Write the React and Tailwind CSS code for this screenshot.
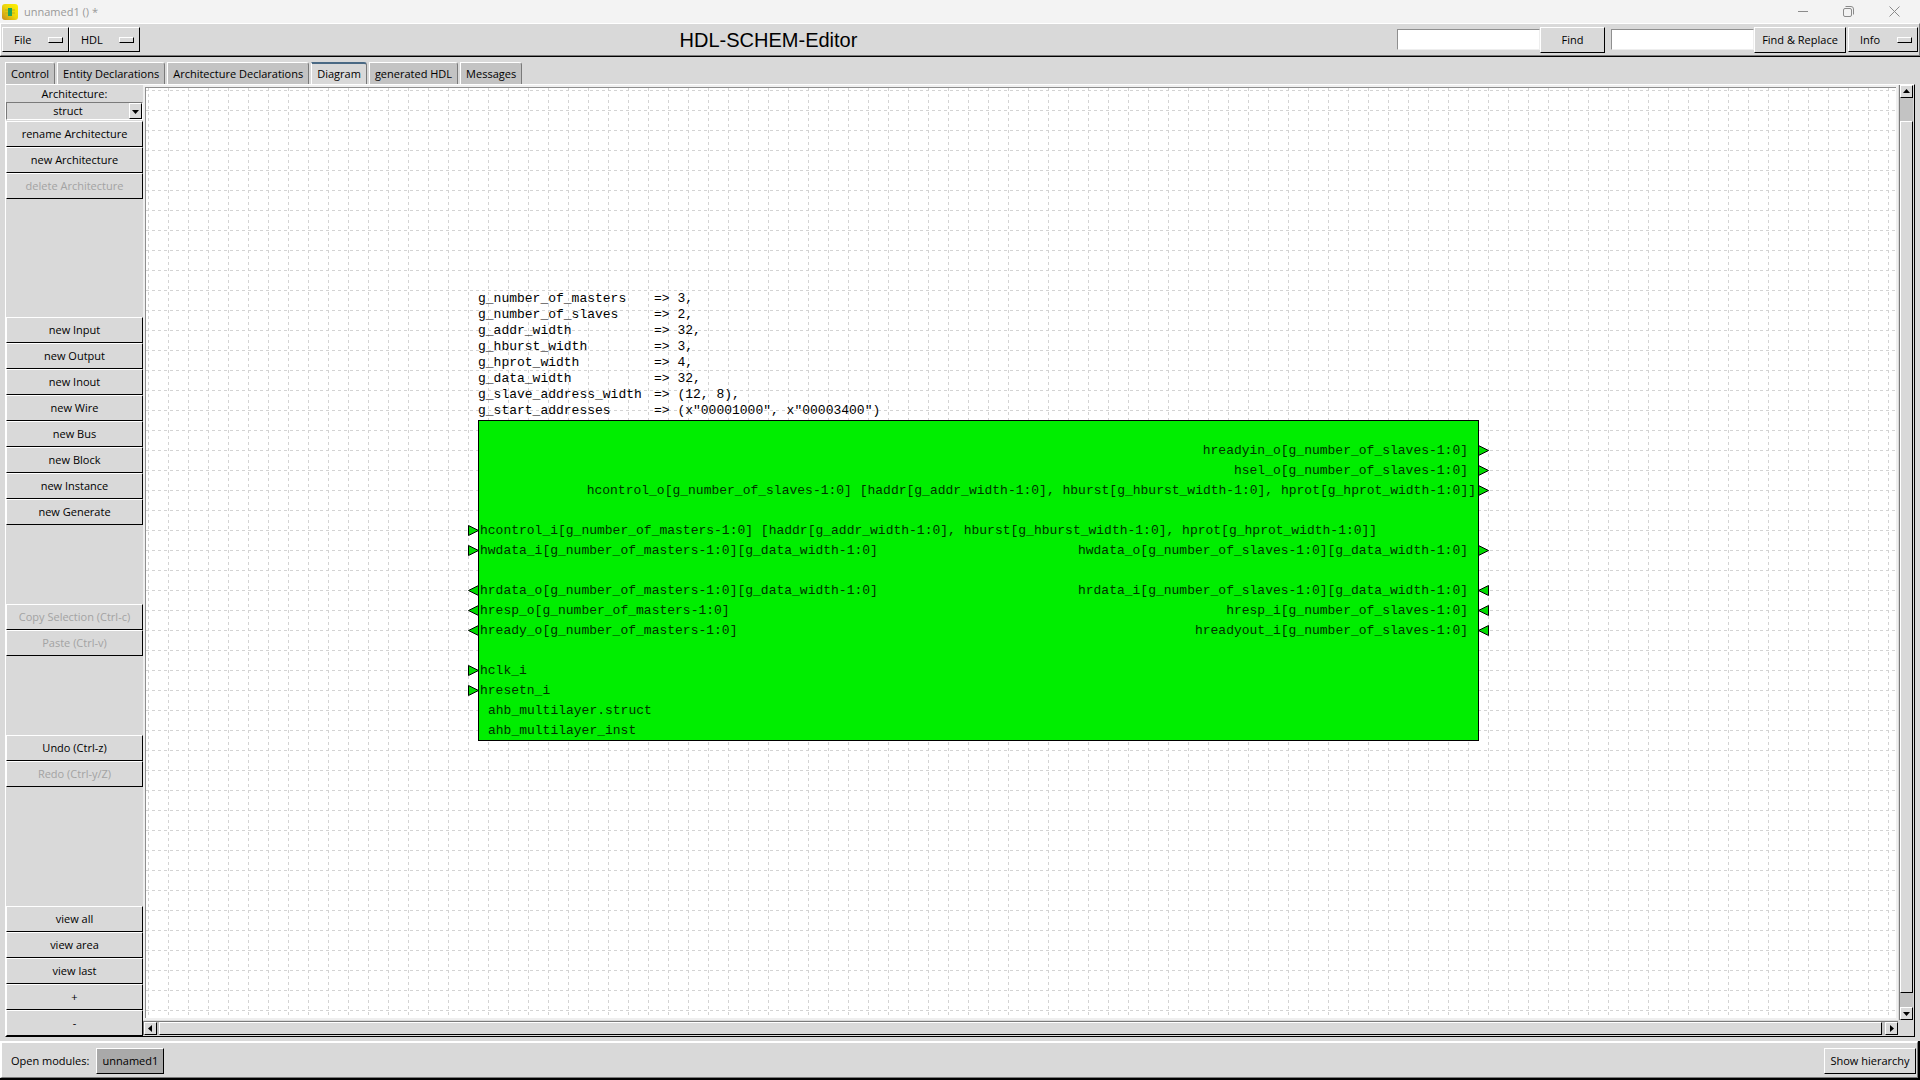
import { useState } from 'react';

const tabs = [
  'Control',
  'Entity Declarations',
  'Architecture Declarations',
  'Diagram',
  'generated HDL',
  'Messages',
];

const insertButtons = ['Input', 'Output', 'Inout', 'Wire', 'Bus', 'Block', 'Instance', 'Generate'];
const viewButtons = ['view all', 'view area', 'view last', '+', '-'];

const generics = [
  { name: 'g_number_of_masters', value: '3,' },
  { name: 'g_number_of_slaves', value: '2,' },
  { name: 'g_addr_width', value: '32,' },
  { name: 'g_hburst_width', value: '3,' },
  { name: 'g_hprot_width', value: '4,' },
  { name: 'g_data_width', value: '32,' },
  { name: 'g_slave_address_width', value: '(12, 8),' },
  { name: 'g_start_addresses', value: '(x"00001000", x"00003400")' },
];

const control = '[haddr[g_addr_width-1:0], hburst[g_hburst_width-1:0], hprot[g_hprot_width-1:0]]';

// y is measured from the top edge of the instance block
const leftPorts = [
  { y: 110, dir: 'in', label: `hcontrol_i[g_number_of_masters-1:0] ${control}` },
  { y: 130, dir: 'in', label: 'hwdata_i[g_number_of_masters-1:0][g_data_width-1:0]' },
  { y: 170, dir: 'out', label: 'hrdata_o[g_number_of_masters-1:0][g_data_width-1:0]' },
  { y: 190, dir: 'out', label: 'hresp_o[g_number_of_masters-1:0]' },
  { y: 210, dir: 'out', label: 'hready_o[g_number_of_masters-1:0]' },
  { y: 250, dir: 'in', label: 'hclk_i' },
  { y: 270, dir: 'in', label: 'hresetn_i' },
];

const rightPorts = [
  { y: 30, dir: 'out', label: 'hreadyin_o[g_number_of_slaves-1:0]' },
  { y: 50, dir: 'out', label: 'hsel_o[g_number_of_slaves-1:0]' },
  { y: 70, dir: 'out', label: `hcontrol_o[g_number_of_slaves-1:0] ${control}`, x: 998 },
  { y: 130, dir: 'out', label: 'hwdata_o[g_number_of_slaves-1:0][g_data_width-1:0]' },
  { y: 170, dir: 'in', label: 'hrdata_i[g_number_of_slaves-1:0][g_data_width-1:0]' },
  { y: 190, dir: 'in', label: 'hresp_i[g_number_of_slaves-1:0]' },
  { y: 210, dir: 'in', label: 'hreadyout_i[g_number_of_slaves-1:0]' },
];

const raised = 'border border-t-white border-l-white border-r-black border-b-black';

function Button({ className = '', children, ...props }) {
  return (
    <button
      type="button"
      className={`h-[26px] shrink-0 whitespace-nowrap bg-[#d9d9d9] text-center disabled:text-[#a3a3a3] ${raised} ${className}`}
      {...props}
    >
      {children}
    </button>
  );
}

function MenuButton({ label, className }) {
  return (
    <button
      type="button"
      className={`flex h-[25px] shrink-0 items-center justify-between pl-[11px] pr-[5px] ${raised} ${className}`}
    >
      {label}
      <span className={`h-[6px] w-[15px] ${raised}`} />
    </button>
  );
}

function Arrow({ dir }) {
  const points = {
    up: '1,6 8,6 4.5,2',
    down: '1,3 8,3 4.5,7',
    left: '6,1 6,8 2,4.5',
    right: '3,1 3,8 7,4.5',
  };
  return (
    <svg className="h-[9px] w-[9px]" viewBox="0 0 9 9">
      <polygon points={points[dir]} />
    </svg>
  );
}

function ScrollArrow({ dir }) {
  return (
    <button
      type="button"
      aria-label={`scroll ${dir}`}
      className={`flex h-[13px] w-[13px] shrink-0 items-center justify-center bg-[#d9d9d9] ${raised}`}
    >
      <Arrow dir={dir} />
    </button>
  );
}

function TitleBar() {
  return (
    <header className="flex h-[23px] shrink-0 items-center bg-[#f3f3f3] pl-[2px] text-[#999999]">
      <svg className="h-4 w-4" viewBox="0 0 16 16">
        <defs>
          <linearGradient id="logo" x1="1" y1="0" x2="0" y2="1">
            <stop offset="0" stopColor="#fff200" />
            <stop offset="0.5" stopColor="#ecd50c" />
            <stop offset="1" stopColor="#c78a1c" />
          </linearGradient>
        </defs>
        <rect width="16" height="16" rx="3" fill="url(#logo)" />
        <path d="M3 6h3M3 9h3M10 6h3M10 9h3" stroke="#b9b020" strokeWidth="1" />
        <rect x="6" y="4" width="4" height="8" fill="#22a45a" />
      </svg>
      <span className="flex-1 pl-[6px]">unnamed1 () *</span>
      <div className="flex gap-[35px] pr-5">
        <button type="button" aria-label="Minimize">
          <svg className="h-[11px] w-[11px]" viewBox="0 0 11 11" fill="none" stroke="#8b8b8b">
            <path d="M1 5.5h10" />
          </svg>
        </button>
        <button type="button" aria-label="Restore">
          <svg className="h-[11px] w-[11px]" viewBox="0 0 11 11" fill="none" stroke="#8b8b8b">
            <rect x="0.5" y="2.5" width="8" height="8" rx="1.5" />
            <path d="M2.5 0.5h5.5a2.5 2.5 0 0 1 2.5 2.5v5.5" />
          </svg>
        </button>
        <button type="button" aria-label="Close">
          <svg className="h-[11px] w-[11px]" viewBox="0 0 11 11" fill="none" stroke="#8b8b8b">
            <path d="M0.5 0.5l10 10M10.5 0.5l-10 10" />
          </svg>
        </button>
      </div>
    </header>
  );
}

function Toolbar() {
  const entry =
    'h-[21px] w-[143px] border border-t-[#8f8f8f] border-l-[#8f8f8f] border-r-[#eeeeee] border-b-[#eeeeee] bg-white px-1 outline-none';
  return (
    <div className="shrink-0 border-b border-black">
      <div className="flex h-[33px] items-center border border-t-white border-l-white border-r-[#7a7a7a] border-b-[#7a7a7a] px-px">
        <MenuButton label="File" className="w-[67px]" />
        <MenuButton label="HDL" className="w-[71px]" />
        <h1 className="flex-1 text-center font-['Liberation_Sans'] text-[20px] leading-6">HDL-SCHEM-Editor</h1>
        <input type="text" aria-label="Find" className={entry} />
        <Button className="mr-[6px] w-[65px]">Find</Button>
        <input type="text" aria-label="Replace" className={entry} />
        <Button className="mr-[2px] w-[92px]">Find &amp; Replace</Button>
        <MenuButton label="Info" className="w-[70px]" />
      </div>
    </div>
  );
}

function Sidebar() {
  return (
    <aside className="flex w-[137px] shrink-0 flex-col">
      <label htmlFor="architecture" className="h-[17px] text-center leading-[17px]">
        Architecture:
      </label>
      <div className="mb-px flex h-[18px] border border-t-[#7a7a7a] border-l-[#7a7a7a] border-r-white border-b-white">
        <select
          id="architecture"
          className="min-w-0 flex-1 appearance-none text-center leading-4 outline-none [text-align-last:center]"
        >
          <option>struct</option>
        </select>
        <span className={`flex w-[13px] items-center justify-center ${raised}`}>
          <Arrow dir="down" />
        </span>
      </div>
      <Button>rename Architecture</Button>
      <Button>new Architecture</Button>
      <Button disabled>delete Architecture</Button>
      <div className="grow-[3] basis-0" />
      {insertButtons.map((name) => (
        <Button key={name}>new {name}</Button>
      ))}
      <div className="grow-[2] basis-px" />
      <Button disabled>Copy Selection (Ctrl-c)</Button>
      <Button disabled>Paste (Ctrl-v)</Button>
      <div className="grow-[2] basis-px" />
      <Button>Undo (Ctrl-z)</Button>
      <Button disabled>Redo (Ctrl-y/Z)</Button>
      <div className="grow-[3] basis-px" />
      {viewButtons.map((name) => (
        <Button key={name}>{name}</Button>
      ))}
    </aside>
  );
}

function Port({ x, y, pointsRight }) {
  const points = pointsRight
    ? `${x},${y - 5} ${x + 10},${y} ${x},${y + 5}`
    : `${x + 10},${y - 5} ${x},${y} ${x + 10},${y + 5}`;
  return <polygon points={points} fill="#00dc00" stroke="black" />;
}

function Schematic() {
  return (
    <svg className="block h-full w-full bg-white font-['Liberation_Mono'] text-[13px]">
      <defs>
        <pattern id="rows" x="0" y="2" width="6" height="20" patternUnits="userSpaceOnUse">
          <rect width="3" height="1" fill="#d3d3d3" />
        </pattern>
        <pattern id="columns" x="2" y="0" width="20" height="6" patternUnits="userSpaceOnUse">
          <rect width="1" height="3" fill="#d3d3d3" />
        </pattern>
      </defs>
      <rect width="100%" height="100%" fill="url(#rows)" />
      <rect width="100%" height="100%" fill="url(#columns)" />

      <g transform="translate(332 332)">
        {generics.map((g, i) => (
          <g key={g.name}>
            <text x="0" y={16 * i - 118}>{g.name}</text>
            <text x="176" y={16 * i - 118}>{`=> ${g.value}`}</text>
          </g>
        ))}

        <g transform="translate(0.5 0.5)">
          <rect width="1000" height="320" fill="#00ee00" stroke="black" />
          {leftPorts.map((p) => (
            <Port key={p.y} x={-10} y={p.y} pointsRight={p.dir === 'in'} />
          ))}
          {rightPorts.map((p) => (
            <Port key={p.y} x={1000} y={p.y} pointsRight={p.dir === 'out'} />
          ))}
        </g>

        <g fill="#003000">
          {leftPorts.map((p) => (
            <text key={p.y} x="2" y={p.y + 4}>{p.label}</text>
          ))}
          {rightPorts.map((p) => (
            <text key={p.y} x={p.x ?? 990} y={p.y + 4} textAnchor="end">{p.label}</text>
          ))}
          <text x="10" y="294">ahb_multilayer.struct</text>
          <text x="10" y="314">ahb_multilayer_inst</text>
        </g>
      </g>
    </svg>
  );
}

function DiagramTab() {
  return (
    <div className="flex min-h-0 flex-1 border border-t-white border-l-white border-r-black border-b-black">
      <Sidebar />
      <div className="grid min-w-0 flex-1 grid-cols-[1fr_14px] grid-rows-[1fr_14px] gap-px pr-px pb-px">
        <div className="min-h-0 min-w-0 border-2 border-[#efefef]">
          <div className="h-full overflow-hidden border-t border-l border-[#8f8f8f]">
            <Schematic />
          </div>
        </div>
        <div className="flex flex-col border-l border-[#7a7a7a] bg-[#c3c3c3]">
          <ScrollArrow dir="up" />
          <div className={`mt-[23px] mb-[14px] flex-1 bg-[#d9d9d9] ${raised}`} />
          <ScrollArrow dir="down" />
        </div>
        <div className="flex border-t border-l border-[#7a7a7a] bg-[#c3c3c3]">
          <ScrollArrow dir="left" />
          <div className={`mr-[3px] ml-[2px] flex-1 bg-[#d9d9d9] ${raised}`} />
          <ScrollArrow dir="right" />
        </div>
      </div>
    </div>
  );
}

export default function App() {
  const [active, setActive] = useState('Diagram');

  return (
    <div className="flex h-screen flex-col bg-[#d9d9d9] font-['Open_Sans',sans-serif] text-[11px] leading-4 text-black">
      <TitleBar />
      <Toolbar />

      <main className="flex min-h-0 flex-1 flex-col px-[5px] pt-[5px] pb-1">
        <nav className="flex h-[22px] shrink-0 gap-[2px]">
          {tabs.map((tab) => (
            <button
              key={tab}
              type="button"
              onClick={() => setActive(tab)}
              className={`rounded-tr-[3px] border-l border-r border-l-white border-r-[#7a7a7a] px-[5px] ${
                tab === active
                  ? 'border-t-2 border-t-[#4a6984] bg-[#d9d9d9]'
                  : 'border-t border-t-white bg-[#c3c3c3]'
              }`}
            >
              {tab}
            </button>
          ))}
        </nav>
        <DiagramTab />
      </main>

      <footer className="shrink-0 border-r-2 border-b-2 border-black">
        <div className="flex items-center border-t-2 border-r border-b border-l-2 border-t-white border-r-[#7a7a7a] border-b-[#7a7a7a] border-l-white pt-[5px] pr-px pb-[3px] pl-[9px]">
          <span className="mr-[7px]">Open modules:</span>
          <button type="button" className={`h-[26px] w-[68px] bg-[#a9a9a9] ${raised}`}>
            unnamed1
          </button>
          <Button className="ml-auto w-[92px]">Show hierarchy</Button>
        </div>
      </footer>
    </div>
  );
}
